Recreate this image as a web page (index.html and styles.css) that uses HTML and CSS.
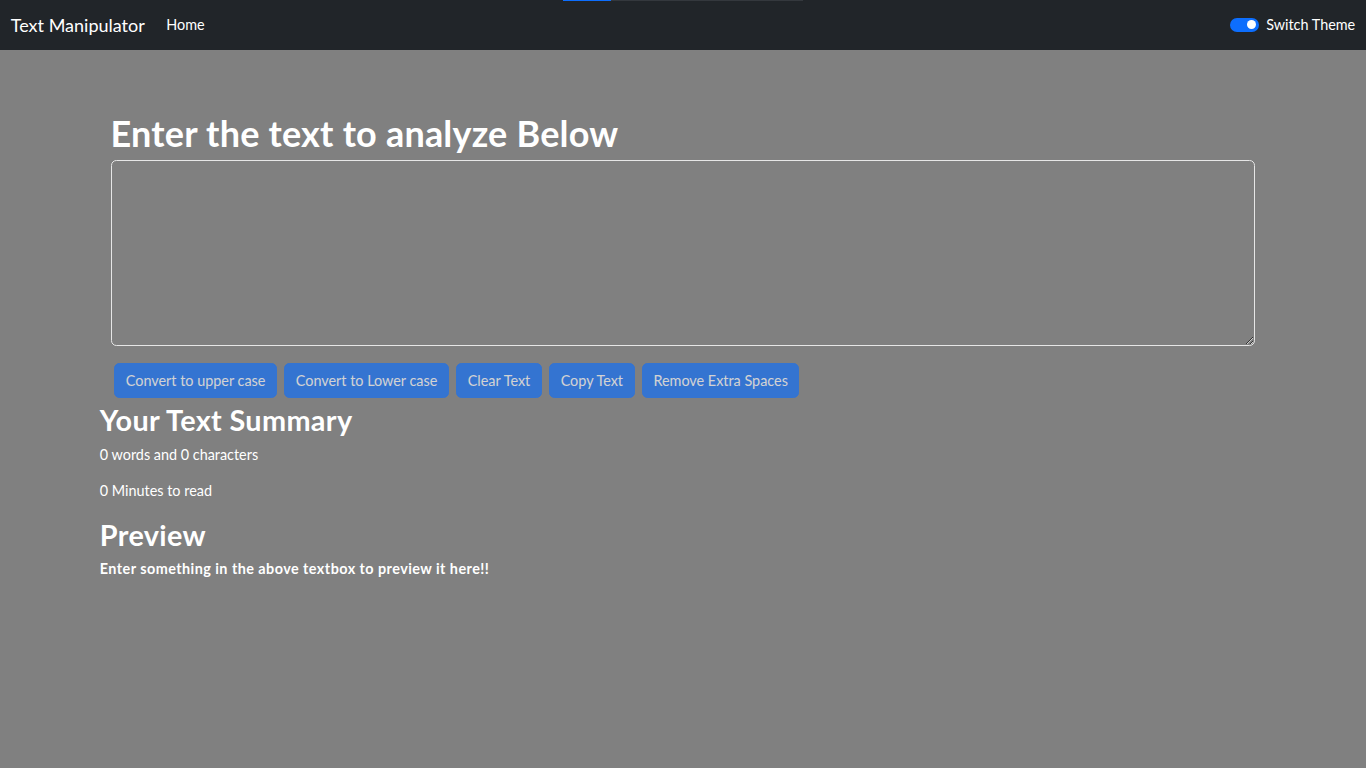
FILE: index.html
```html
<!DOCTYPE html>
<html lang="en">
<head>
<meta charset="utf-8">
<title>Text Manipulator</title>
<link rel="stylesheet" href="styles.css">
</head>
<body>
<div class="loadbar"><div class="loadbar-fill"></div></div>
<nav class="navbar">
  <div class="nav-left">
    <a class="brand" href="#">Text Manipulator</a>
    <a class="nav-link" href="#">Home</a>
  </div>
  <label class="switch">
    <span class="switch-track"><span class="switch-knob"></span></span>
    <span class="switch-label">Switch Theme</span>
  </label>
</nav>
<div class="alert-space"></div>
<main class="container">
  <section class="form-area">
    <h1 class="title">Enter the text to analyze Below</h1>
    <textarea class="text-input" rows="8"></textarea>
    <div class="btn-row">
      <button class="btn">Convert to upper case</button>
      <button class="btn">Convert to Lower case</button>
      <button class="btn">Clear Text</button>
      <button class="btn">Copy Text</button>
      <button class="btn">Remove Extra Spaces</button>
    </div>
  </section>
  <section class="summary">
    <h2 class="subtitle">Your Text Summary</h2>
    <p class="info">0 words and 0 characters</p>
    <p class="info">0 Minutes to read</p>
    <h2 class="subtitle">Preview</h2>
    <p class="preview">Enter something in the above textbox to preview it here!!</p>
  </section>
</main>
</body>
</html>
```
FILE: styles.css
```css
* { box-sizing: border-box; }
html, body { margin: 0; padding: 0; }
body {
  background: #808080;
  color: #ffffff;
  font-family: "Lato", "Open Sans", sans-serif;
  font-size: 14.4px;
  line-height: 1.5;
  min-height: 768px;
}
.loadbar {
  position: absolute;
  top: 0;
  left: 563px;
  width: 240px;
  height: 1px;
  background: #34383d;
  z-index: 5;
}
.loadbar-fill {
  width: 48px;
  height: 1px;
  background: #0d6efd;
}
.navbar {
  height: 50px;
  background: #212529;
  display: flex;
  align-items: center;
  justify-content: space-between;
  padding: 0 10.8px;
}
.nav-left { display: flex; align-items: center; }
.brand {
  color: #fff;
  text-decoration: none;
  font-size: 18px;
  margin-right: 14.4px;
}
.nav-link {
  color: #fff;
  text-decoration: none;
  font-size: 14.4px;
  padding: 0 7.2px;
}
.switch { display: flex; align-items: center; gap: 7.2px; color: #fff; font-size: 14.4px; }
.switch-track {
  width: 28.8px;
  height: 14.4px;
  border-radius: 8px;
  background: #0d6efd;
  display: flex;
  align-items: center;
  justify-content: flex-end;
  padding-right: 3px;
}
.switch-knob {
  width: 9px;
  height: 9px;
  border-radius: 50%;
  background: #fff;
}
.alert-space { height: 45px; }
.container {
  width: 1188px;
  margin: 14.4px auto;
  padding: 0 10.8px;
}
.form-area { padding: 0 10.8px; }
.title {
  font-size: 36px;
  font-weight: 700;
  line-height: 1.2;
  letter-spacing: 0.2px;
  padding-top: 3px;
  margin: 0 0 4.2px;
}
.text-input {
  display: block;
  width: 100%;
  height: 186px;
  background: #808080;
  color: #fff;
  border: 0.9px solid #e6e6e6;
  border-radius: 5.4px;
  padding: 5.4px 10.8px;
  font: inherit;
  margin-bottom: 14px;
}
.btn-row { display: flex; flex-wrap: wrap; }
.btn {
  margin: 3.6px;
  background: #0d6efd;
  border: 0.9px solid #0d6efd;
  color: #fff;
  opacity: 0.65;
  font-family: inherit;
  font-size: 14.4px;
  line-height: 1.5;
  padding: 5.4px 10.6px;
  border-radius: 5.4px;
}
.subtitle {
  font-size: 28.8px;
  font-weight: 700;
  line-height: 1.2;
  letter-spacing: 0.35px;
  padding-top: 1.5px;
  margin: 0 0 5.7px;
}
.info { margin: 0 0 14.4px; padding-top: 1px; }
.info + .info { padding-top: 0; }
.preview { margin: 0; font-weight: 700; letter-spacing: 0.45px; }
```
